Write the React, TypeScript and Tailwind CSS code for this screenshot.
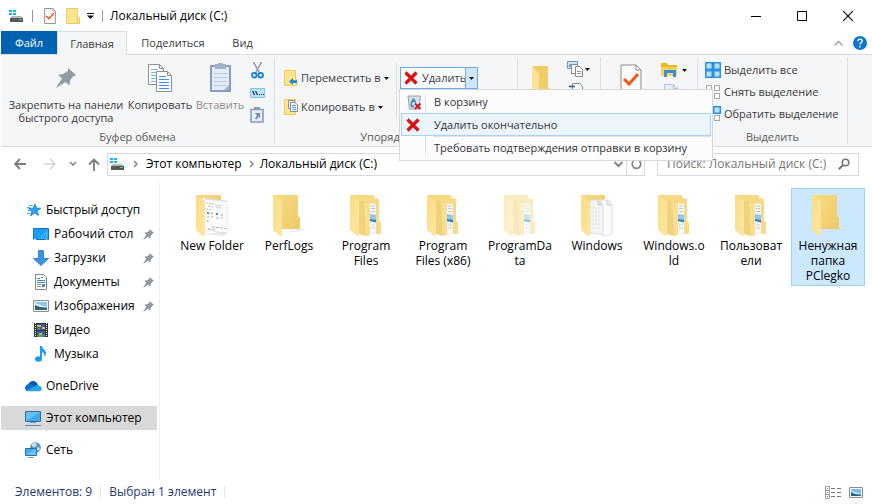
import type { ReactNode } from 'react';

function Drive() {
  return (
    <svg width="16" height="16" viewBox="0 0 16 16" className="shrink-0" aria-hidden="true">
      <path d="M1 2h3v2H1zM5 2h3v2H5zM1 5h3v2H1zM5 5h3v2H5z" fill="#16b4f0" />
      <path d="M4 8h9l2 2H2z" fill="#b4b7b9" />
      <path d="M2 10h13v4H2z" fill="#55585b" />
      <path d="M11 11h3v1h-3z" fill="#3fe03f" />
    </svg>
  );
}

function CheckDoc({ big = false }: { big?: boolean }) {
  return (
    <svg width={big ? 22 : 12} height={big ? 30 : 16} viewBox="0 0 22 30" className="shrink-0" aria-hidden="true">
      <path d="M1 1h15l5 5v23H1z" fill="#fcfcfc" stroke="#8b8b8b" strokeWidth={big ? 1 : 1.8} />
      <path d="M16 1v5h5" fill="none" stroke="#8b8b8b" />
      <path d="M4 15l5 5L18 10" fill="none" stroke="#f0591e" strokeWidth="3" />
    </svg>
  );
}

function SmallFolder() {
  return (
    <svg width="14" height="16" viewBox="0 0 14 16" className="shrink-0" aria-hidden="true">
      <path d="M.5.5h11V10h2v5.500H.5z" fill="#fce58f" stroke="#eacb62" />
      <path d="M11.500 10v5" stroke="#eacb62" />
    </svg>
  );
}

function Caret() {
  return (
    <svg width="5" height="3" viewBox="0 0 5 3" className="shrink-0" aria-hidden="true">
      <path d="M0 0h5L2.500 3z" fill="#111" />
    </svg>
  );
}

function Chevron({ down = false }: { down?: boolean }) {
  return (
    <svg width="8" height="8" viewBox="0 0 8 8" className="shrink-0" aria-hidden="true">
      <path d={down ? 'M1 2L4 5L7 2' : 'M2 1l3 3L2 7'} fill="none" stroke="#8a8a8a" strokeWidth="1.600" />
    </svg>
  );
}

function Pin({ size, color = '#8f9aa3' }: { size: number; color?: string }) {
  return (
    <svg width={size} height={size} viewBox="0 0 20 20" className="shrink-0" aria-hidden="true">
      <path d="M12 0l8 7-3 1.500-3 4-.5 5-4-3.500L0 20l6-9.500L2 7l5-1 5-3z" fill={color} />
    </svg>
  );
}

function CopyPages() {
  return (
    <svg width="25" height="28" viewBox="0 0 25 28" aria-hidden="true">
      <path d="M.5.5h11l4 4v16H.5z" fill="#fff" stroke="#8a9097" />
      <path d="M11.500.5v4h4" fill="none" stroke="#8a9097" />
      <path d="M3 5.500h7M3 8.500h10M3 11.500h10M3 14.500h10M3 17.500h10" stroke="#7db4f5" />
      <path d="M8.500 7.500h11l4 4v16h-15z" fill="#fff" stroke="#8a9097" />
      <path d="M19.500 7.500v4h4" fill="none" stroke="#8a9097" />
      <path d="M11 12.500h7M11 15.500h10M11 18.500h10M11 21.500h10M11 24.500h10" stroke="#3d8df2" />
    </svg>
  );
}

function Clipboard() {
  return (
    <svg width="21" height="29" viewBox="0 0 21 29" aria-hidden="true">
      <rect x="1" y="3" width="19" height="25" fill="#e4ebf6" stroke="#8b9cc0" strokeWidth="2" />
      <path d="M5 1h3V0h5v1h3v5H5z" fill="#a3b0ca" />
      <path d="M4 10.500h13M4 14.500h13M4 18.500h13M4 22.500h13" stroke="#bccbe4" />
      <path d="M14 27l5-5v5z" fill="#a3b0ca" />
    </svg>
  );
}

function Scissors() {
  return (
    <svg width="13" height="17" viewBox="0 0 13 17" aria-hidden="true">
      <path d="M2.500 0L8.500 11M10.500 0L4.500 11" stroke="#8797a8" strokeWidth="1.400" />
      <circle cx="3.300" cy="13.300" r="2.300" fill="none" stroke="#1583cf" strokeWidth="1.800" />
      <circle cx="9.700" cy="13.300" r="2.300" fill="none" stroke="#1583cf" strokeWidth="1.800" />
    </svg>
  );
}

function CopyPath() {
  return (
    <svg width="15" height="10" viewBox="0 0 15 10" aria-hidden="true">
      <path d="M.5.5h14v9H.5z" fill="#b9e2fb" stroke="#85c3ee" />
      <path d="M2.500 3l2 4M5.500 3l2 4M9 6.500h1M11 6.500h1M13 6.500h1" stroke="#17324d" strokeWidth="1.200" />
    </svg>
  );
}

function PasteShortcut() {
  return (
    <svg width="14" height="16" viewBox="0 0 14 16" aria-hidden="true">
      <path d="M1 2.500h12V15H1z" fill="#e6edf7" stroke="#8b9cc0" strokeWidth="1.600" />
      <path d="M4 0h6v3H4z" fill="#8b9cc0" />
      <path d="M5 6h5v5L8.500 9.500l-2 3-1.500-1 2-3z" fill="#7689b0" />
    </svg>
  );
}

function MoveTo() {
  return (
    <svg width="14" height="16" viewBox="0 0 14 16" className="shrink-0" aria-hidden="true">
      <path d="M.5.5h11V9l1 1v5.500H.5z" fill="#fce58f" stroke="#eacb62" />
      <path d="M5 11.500L9 8v2.300h4v2.600H9V15z" fill="#1c86d8" />
    </svg>
  );
}

function CopyTo() {
  return (
    <svg width="14" height="16" viewBox="0 0 14 16" className="shrink-0" aria-hidden="true">
      <path d="M.5.5h11v15H.5z" fill="#fce58f" stroke="#eacb62" />
      <path d="M4.500 1.500h6v8h-6z" fill="#fff" stroke="#858b93" />
      <path d="M6.500 3.500h4.500l2.500 2.500v6.500h-7z" fill="#fff" stroke="#858b93" />
      <path d="M8 6.500h4M8 8.500h4M8 10.500h4" stroke="#4a9af0" />
    </svg>
  );
}

function RedCross() {
  return (
    <svg width="14" height="14" viewBox="0 0 14 14" className="shrink-0" aria-hidden="true">
      <path d="M1.500 1.500L12.500 12.500M12.500 1.500L1.500 12.500" stroke="#dc1212" strokeWidth="3.200" />
    </svg>
  );
}

function RecycleBin() {
  return (
    <svg width="15" height="15" viewBox="0 0 15 15" className="shrink-0" aria-hidden="true">
      <path d="M1 1h12.500l-1.500 13H2.500z" fill="#d9dfe4" stroke="#9ba2a8" />
      <path d="M4 8.500l2.500-4 2 3M4 9L5 11.500h2" fill="none" stroke="#2585d0" strokeWidth="1.700" />
      <path d="M8 8.500l5.500 5.500M13.500 8.500L8 14" stroke="#d3131c" strokeWidth="1.900" />
    </svg>
  );
}

function NewFolder() {
  return (
    <svg width="20" height="42" viewBox="0 0 20 42" aria-hidden="true">
      <path d="M1 0h15v22l3 1v13H1z" fill="#f1cd68" />
      <path d="M0 0l7 8v33l-7-6z" fill="#fde396" />
    </svg>
  );
}

function NewItem() {
  return (
    <svg width="16" height="16" viewBox="0 0 16 16" aria-hidden="true">
      <path d="M.5.5h10v7H.5z" fill="#c9e7fb" stroke="#7d94a8" />
      <path d="M2 4h7M2 6l3-2 3 2" stroke="#2c7fb8" fill="none" />
      <path d="M4.500 3.500h6v9h-6z" fill="#eef5fb" stroke="#858b93" />
      <path d="M8.500 5.500h4l3 3v7h-7z" fill="#fff" stroke="#858b93" />
      <path d="M10 10.500h4M10 12.500h4" stroke="#8c949c" />
    </svg>
  );
}

function EasyAccess() {
  return (
    <svg width="14" height="16" viewBox="0 0 14 16" aria-hidden="true">
      <path d="M3.500.5h7l3 3v12h-10z" fill="#fff" stroke="#858b93" />
      <path d="M0 3.500h6" stroke="#205f98" strokeWidth="1.600" />
    </svg>
  );
}

function OpenFolder() {
  return (
    <svg width="17" height="15" viewBox="0 0 17 15" aria-hidden="true">
      <path d="M0 0h6l1 2h9v11H0z" fill="#f0b429" />
      <path d="M0 4h16v9H0z" fill="#ffd45e" />
      <path d="M3 14V7h12v7h-3v-4H6v4z" fill="#2f8fe2" />
    </svg>
  );
}

function EditPage() {
  return (
    <svg width="14" height="16" viewBox="0 0 14 16" aria-hidden="true">
      <path d="M.5.5h9l4 4v11H.5z" fill="#e9f0fa" stroke="#b4c4de" />
      <path d="M9.500.5v4h4" fill="none" stroke="#b4c4de" />
    </svg>
  );
}

function SelectGrid({ on }: { on: boolean[] }) {
  const cells = [[0, 0], [8, 0], [0, 8], [8, 8]];
  return (
    <svg width="16" height="16" viewBox="0 0 16 16" className="shrink-0" aria-hidden="true">
      {cells.map(([x, y], i) =>
        on[i] ? (
          <rect key={i} x={x + 0.75} y={y + 0.75} width={6.5} height={6.5} fill="#b6e2fc" stroke="#2a8fe0" strokeWidth={1.5} />
        ) : (
          <rect key={i} x={x + 1.5} y={y + 1.5} width={5} height={5} fill="#fdfdfd" stroke="#a9a9a9" />
        ),
      )}
    </svg>
  );
}

function Folder({ kind }: { kind: string }) {
  return (
    <svg width="34" height="42" viewBox="0 0 34 42" className={kind === 'hidden' ? 'opacity-50' : ''} aria-hidden="true">
      <defs>
        <linearGradient id="flap" x1="0" x2="1" y1="0" y2="1">
          <stop offset="0" stopColor="#f9dd85" />
          <stop offset="1" stopColor="#fde6a0" />
        </linearGradient>
        <linearGradient id="back" x1="0" x2="1" y1="0" y2="1">
          <stop offset="0" stopColor="#f8dc82" />
          <stop offset="1" stopColor="#edca69" />
        </linearGradient>
      </defs>
      {kind === 'empty' && (
        <>
          <path d="M9 39l19-5h3l-4 2z" fill="#dcdcdc" opacity=".7" />
          <path d="M1 0h25v21l2 1.500V34H1z" fill="url(#back)" />
        </>
      )}
      {kind === 'window' && (
        <>
          <path d="M1 0h25v12H1z" fill="url(#back)" />
          <path d="M10 39l22-3v3l-4 2z" fill="#ddd" opacity=".7" />
          <path d="M7 3l25 3v32L9 35z" fill="#fcfcfc" stroke="#dedede" strokeWidth=".7" />
          <path d="M10 4l21 2.500" stroke="#d5dbe0" />
          <path d="M11 8l8 1M13 11l5 1M20 10l7 1M21 12l5 1M11 14l6 1" stroke="#aaa" strokeWidth=".8" strokeDasharray="2 1" />
          <path d="M12 18h2M21 19h2" stroke="#3793d5" strokeWidth="2" />
          <path d="M16 18.500h2" stroke="#e4bc4d" strokeWidth="2" />
          <path d="M26 20h2M12 22h2M16 22h2M21 23h2M26 23h2M11 26h3" stroke="#aaa" />
          <path d="M17 32l14 1.500M13 34l8 1" stroke="#999" strokeWidth=".8" strokeDasharray="3 1" />
        </>
      )}
      {kind === 'pages' && (
        <>
          <path d="M1 0h24v12H1z" fill="url(#back)" />
          <path d="M10 5h11l4 4v31l-15-2z" fill="#f4f4f4" stroke="#dcdcdc" />
          <path d="M20 5h8l4 4v30l-9 2V9z" fill="#fbfbfb" stroke="#e0e0e0" />
          <path d="M27 5v5h5" fill="#e6e6e6" stroke="#d2d2d2" />
          <path d="M18 5l4 5h-4z" fill="#e6e6e6" stroke="#d2d2d2" />
          <path d="M12 13h8M12 17h8M12 21h8M12 25h8M12 29h8M12 33h8" stroke="#e0e0e0" strokeDasharray="2 1" />
        </>
      )}
      {(kind === 'full' || kind === 'hidden') && (
        <>
          <path d="M1 0h24v3l5 1v22l2 1.500V39H10L1 34z" fill="#f6d982" />
          <path d="M20 8l7 1v30l-7 1z" fill="#f4f5f5" />
          <path d="M22 11h4M22 13.500h4M22 16.500h4" stroke="#b9cad6" />
          <path d="M21 19l6 1v6l-6-2z" fill="#93c7ee" />
          <path d="M21 24l6 1v2.500l-6-1.500z" fill="#2a83c4" />
          <path d="M22 30h4M22 33h4" stroke="#d3dadf" />
          <path d="M27 26h3l2 1.500V39h-5z" fill="#f7db86" />
          <path d="M10 5l11 3v32l-4 1-7-2z" fill="#efd27e" />
          <path d="M15 7l6 1.500V40l-4 1z" fill="#fadf90" />
        </>
      )}
      <path d="M1 0l9 6v34l-1.500 1.500L1 35z" fill="url(#flap)" />
    </svg>
  );
}

function Star() {
  return (
    <svg width="16" height="16" viewBox="0 0 16 16" className="shrink-0" aria-hidden="true">
      <path d="M9 2l1.500 4 4.500.3-3.700 2.700 1.200 4.500L8.500 11l-4 3 1.300-4.700L2.500 6.500l4.500-.3z" fill="#29a3ec" stroke="#1678b8" strokeWidth=".7" />
      <path d="M3 3.500h4M1 5.500h3M2 8.500h3M1 11.500h3" stroke="#3eb0f0" />
    </svg>
  );
}

function Desktop() {
  return (
    <svg width="16" height="16" viewBox="0 0 16 16" className="shrink-0" aria-hidden="true">
      <path d="M.5 2.500h15v11H.5z" fill="#1c9df5" stroke="#0d74c4" />
      <path d="M5 13L15 3v10z" fill="#35adfa" />
      <path d="M1 13.500h2M13 13.500h1" stroke="#fff" />
    </svg>
  );
}

function Download() {
  return (
    <svg width="16" height="16" viewBox="0 0 16 16" className="shrink-0" aria-hidden="true">
      <path d="M5.500.5h5v8h5L8 15.500.5 8.500h5z" fill="#3d93e3" stroke="#2374c4" strokeWidth=".8" />
    </svg>
  );
}

function Docs() {
  return (
    <svg width="16" height="16" viewBox="0 0 16 16" className="shrink-0" aria-hidden="true">
      <path d="M2.500.5h8l3 3v12h-11z" fill="#fff" stroke="#868686" />
      <path d="M4 4.500h3M8 3.500h2M4 6.500h8M4 8.500h8" stroke="#3a8ed0" />
      <path d="M4 10.500h4M4 12.500h4" stroke="#999" />
      <path d="M9 10h3v3H9z" fill="#5d88ac" />
    </svg>
  );
}

function Picture() {
  return (
    <svg width="16" height="16" viewBox="0 0 16 16" className="shrink-0" aria-hidden="true">
      <path d="M.5 2.500h15v11H.5z" fill="#fff" stroke="#8b8b8b" />
      <path d="M2 4h12v8H2z" fill="#8cc4f0" />
      <path d="M2 5l6 2 6 2H2z" fill="#d9edfa" />
      <path d="M2 7l5 2 7 1v2H2z" fill="#2a6472" />
    </svg>
  );
}

function Video() {
  return (
    <svg width="16" height="16" viewBox="0 0 16 16" className="shrink-0" aria-hidden="true">
      <path d="M1 1h14v14H1z" fill="#333" />
      <path d="M2.500 1v14M13.500 1v14" stroke="#eee" strokeDasharray="1 1" />
      <path d="M4 2h8v6H4zM4 9h8v6H4z" fill="#2f5fb5" />
      <path d="M4 3h4v2H4zM9 5h3v2H9zM6 11h3v2H6z" fill="#e7b33c" />
      <path d="M5 6h2v2H5zM4 13h8v2H4z" fill="#4d9b58" />
    </svg>
  );
}

function Music() {
  return (
    <svg width="16" height="16" viewBox="0 0 16 16" className="shrink-0" aria-hidden="true">
      <ellipse cx="5.500" cy="13" rx="3.500" ry="2.700" fill="#1b9bf2" />
      <path d="M7 0h2c0 3 4 4 4 7 0 2-1 3-2 4 1-3 0-4-2-5v7H7z" fill="#1b9bf2" />
    </svg>
  );
}

function OneDrive() {
  return (
    <svg width="17" height="16" viewBox="0 0 17 16" className="shrink-0" aria-hidden="true">
      <path d="M3 7c1-3 3-4 5-4s4 1 5 4l-5 4z" fill="#0a59b0" />
      <path d="M0 10c0-2 2-4 4-4 2-.5 4 1 6 2l-7 5C1 13 0 12 0 10z" fill="#0e6fcf" />
      <path d="M2 12.500L10 8c2-1.500 4-1 4.500 0 2 .5 2.500 2 2.300 3-.3 1.500-1.500 2.200-2.800 2.200H3.500z" fill="#2aa4ea" />
    </svg>
  );
}

function Computer() {
  return (
    <svg width="17" height="16" viewBox="0 0 17 16" className="shrink-0" aria-hidden="true">
      <path d="M.5 1.500h15v10H.5z" fill="#63c3f9" stroke="#3a6d91" />
      <path d="M1 11L15 2v9z" fill="#3fa8ee" />
      <path d="M5 12.500h6" stroke="#7797ad" />
      <path d="M0 15.500h16" stroke="#6f889a" />
    </svg>
  );
}

function Network() {
  return (
    <svg width="17" height="16" viewBox="0 0 17 16" className="shrink-0" aria-hidden="true">
      <circle cx="10.500" cy="5.500" r="5.300" fill="#5a93b5" />
      <path d="M7 2l3-1.500 2 2-2 3-3-1zM12 5l3 1-1 3-2-1z" fill="#c3dfec" />
      <path d="M.5 6.500h11v7H.5z" fill="#45aef0" stroke="#2a6f9f" />
      <path d="M1 13l10-6v6z" fill="#69c6fb" />
      <path d="M3 15.500h6" stroke="#7797ad" />
    </svg>
  );
}

function Divider() {
  return <div className="my-[2px] w-px shrink-0 bg-[#dfe0e3]" />;
}

function Group({ label, className, children }: { label?: string; className: string; children: ReactNode }) {
  return (
    <section className={`flex shrink-0 flex-col ${className}`}>
      <div className="flex h-[74px] items-start">{children}</div>
      {label && <h2 className="text-center leading-4 text-[#5a5a5a]">{label}</h2>}
    </section>
  );
}

const places = [
  { name: 'Рабочий стол', icon: <Desktop />, pinned: true },
  { name: 'Загрузки', icon: <Download />, pinned: true },
  { name: 'Документы', icon: <Docs />, pinned: true },
  { name: 'Изображения', icon: <Picture />, pinned: true },
  { name: 'Видео', icon: <Video />, pinned: false },
  { name: 'Музыка', icon: <Music />, pinned: false },
];

const roots = [
  { name: 'OneDrive', icon: <OneDrive />, active: false },
  { name: 'Этот компьютер', icon: <Computer />, active: true },
  { name: 'Сеть', icon: <Network />, active: false },
];

const files = [
  { name: 'New Folder', kind: 'window' },
  { name: 'PerfLogs', kind: 'empty' },
  { name: 'Program Files', kind: 'full' },
  { name: 'Program Files (x86)', kind: 'full' },
  { name: 'ProgramData', kind: 'hidden' },
  { name: 'Windows', kind: 'pages' },
  { name: 'Windows.o\nld', kind: 'full' },
  { name: 'Пользователи', kind: 'full' },
  { name: 'Ненужная папка PClegko', kind: 'empty', selected: true },
];

function TitleBar() {
  return (
    <header className="flex h-[31px] items-center pr-px pl-2 text-black">
      <Drive />
      <span className="ml-2 h-3 w-px bg-[#9a9a9a]" />
      <button className="ml-[11px]" aria-label="Свойства"><CheckDoc /></button>
      <button className="ml-[10px]" aria-label="Новая папка"><SmallFolder /></button>
      <button className="ml-[7px]" aria-label="Настройка панели">
        <svg width="7" height="6" viewBox="0 0 7 6" aria-hidden="true">
          <path d="M0 .5h7" stroke="#111" />
          <path d="M0 2.500h7L3.500 6z" fill="#111" />
        </svg>
      </button>
      <span className="ml-2 h-3 w-px bg-[#9a9a9a]" />
      <h1 className="ml-[7px] grow">Локальный диск (C:)</h1>
      <button className="flex h-full w-[46px] items-center justify-center" aria-label="Свернуть">
        <svg width="10" height="10" viewBox="0 0 10 10"><path d="M0 5.500h10" stroke="#000" /></svg>
      </button>
      <button className="flex h-full w-[46px] items-center justify-center" aria-label="Развернуть">
        <svg width="10" height="10" viewBox="0 0 10 10"><path d="M.5.5h9v9h-9z" fill="none" stroke="#000" /></svg>
      </button>
      <button className="flex h-full w-[46px] items-center justify-center" aria-label="Закрыть">
        <svg width="10" height="10" viewBox="0 0 10 10"><path d="M0 0l10 10M10 0L0 10" stroke="#000" strokeWidth="1.100" /></svg>
      </button>
    </header>
  );
}

function Tabs() {
  return (
    <nav className="flex h-6 items-stretch border-b border-[#dadbdc] pl-px text-[11px] text-[#3b3b3b]">
      <button className="w-14 bg-[#0063b1] text-white">Файл</button>
      <button className="-mb-px w-[70px] border border-b-0 border-[#dadbdc] bg-[#f5f6f7]">Главная</button>
      <button className="w-[92px]">Поделиться</button>
      <button className="w-[47px]">Вид</button>
      <div className="grow" />
      <button className="mr-[10px]" aria-label="Свернуть ленту">
        <svg width="9" height="6" viewBox="0 0 9 6"><path d="M.5 5.500L4.500 1.500l4 4" fill="none" stroke="#a0a0a0" strokeWidth="1.500" /></svg>
      </button>
      <button className="mr-[5px]" aria-label="Справка">
        <svg width="14" height="14" viewBox="0 0 14 14">
          <circle cx="7" cy="7" r="7" fill="#0f75cf" />
          <path d="M5 5.200c0-2.800 4.200-2.600 4.200-.1 0 1.600-2.200 1.500-2.200 3.400M7 9.800v1.600" fill="none" stroke="#fff" strokeWidth="1.400" />
        </svg>
      </button>
    </nav>
  );
}

function DeleteMenu() {
  return (
    <div role="menu" className="absolute top-[22px] -left-px z-10 w-[314px] border border-[#d5d7da] bg-[#fcfcfd] p-px text-[#333]">
      <div className="absolute inset-y-1 left-[25px] w-px bg-[#e1e3e6]" />
      <button role="menuitem" className="flex h-[22px] w-full items-center pl-[6px] text-left">
        <RecycleBin />
        <span className="ml-3">В корзину</span>
      </button>
      <button role="menuitem" className="relative flex h-[23px] w-full items-center border border-[#a8d2fa] bg-[#ecf4fc] pl-1 text-left">
        <RedCross />
        <span className="ml-[14px]">Удалить окончательно</span>
      </button>
      <div className="ml-8 h-px bg-[#e1e3e6]" />
      <button role="menuitem" className="flex h-[22px] w-full items-center pl-[33px] text-left">
        Требовать подтверждения отправки в корзину
      </button>
    </div>
  );
}

function Ribbon() {
  return (
    <div className="ml-px flex h-[92px] items-stretch border-b border-[#d9dadc] bg-[#f5f6f7] text-[11px] text-[#3b3b3b]">
      <Group label="Буфер обмена" className="w-[273px]">
        <button className="ml-[5px] flex w-[120px] flex-col items-center pt-[13px] leading-[13px]">
          <Pin size={20} />
          <span className="mt-[10px]">Закрепить на панели быстрого доступа</span>
        </button>
        <button className="flex w-[68px] flex-col items-center pt-[9px] leading-[13px]">
          <CopyPages />
          <span className="mt-[6px]">Копировать</span>
        </button>
        <button className="flex w-[52px] flex-col items-center pt-2 leading-[13px] text-[#8d8d8d]">
          <Clipboard />
          <span className="mt-[6px]">Вставить</span>
        </button>
        <div className="flex w-[22px] flex-col items-center gap-[9px] pt-[7px]">
          <button aria-label="Вырезать"><Scissors /></button>
          <button aria-label="Скопировать путь"><CopyPath /></button>
          <button aria-label="Вставить ярлык"><PasteShortcut /></button>
        </div>
      </Group>
      <Divider />
      <Group label="Упорядочить" className="w-[242px]">
        <div className="flex w-[121px] flex-col gap-[13px] pt-[15px] pl-[9px] whitespace-nowrap">
          <button className="flex h-4 items-center gap-[3px]">
            <MoveTo />
            Переместить в
            <Caret />
          </button>
          <button className="flex h-4 items-center gap-[3px]">
            <CopyTo />
            Копировать в
            <Caret />
          </button>
        </div>
        <div className="mt-2 h-14 w-px bg-[#dfe0e3]" />
        <div className="relative mt-3 ml-[3px] flex h-[22px]">
          <button className="flex w-[66px] items-center gap-1 border border-[#6aaaea] bg-[#fbfcfd] pl-[3px]">
            <RedCross />
            Удалить
          </button>
          <button className="-ml-px flex w-[13px] items-center justify-center border border-[#6aaaea] bg-[#cfe5fc]" aria-label="Параметры удаления">
            <Caret />
          </button>
          <DeleteMenu />
        </div>
      </Group>
      <Divider />
      <Group className="w-[82px]">
        <button className="mt-[11px] ml-[14px]" aria-label="Новая папка"><NewFolder /></button>
        <div className="mt-[6px] ml-[15px] flex flex-col gap-[6px]">
          <button className="flex items-center gap-[2px]" aria-label="Создать элемент"><NewItem /><Caret /></button>
          <button aria-label="Простой доступ" className="pl-[2px]"><EasyAccess /></button>
        </div>
      </Group>
      <Divider />
      <Group className="w-24">
        <button className="mt-[9px] ml-[19px]" aria-label="Свойства"><CheckDoc big /></button>
        <div className="mt-2 ml-[19px] flex flex-col gap-[6px]">
          <button className="flex items-center gap-1" aria-label="Открыть"><OpenFolder /><Caret /></button>
          <button aria-label="Изменить" className="pl-[3px]"><EditPage /></button>
        </div>
      </Group>
      <Divider />
      <Group label="Выделить" className="w-[149px]">
        <div className="flex flex-col pt-1 pl-[7px] whitespace-nowrap">
          <button className="flex h-[22px] items-center gap-[3px]"><SelectGrid on={[true, true, true, true]} />Выделить все</button>
          <button className="flex h-[22px] items-center gap-[3px]"><SelectGrid on={[false, false, false, false]} />Снять выделение</button>
          <button className="flex h-[22px] items-center gap-[3px]"><SelectGrid on={[true, true, false, false]} />Обратить выделение</button>
        </div>
      </Group>
      <Divider />
    </div>
  );
}

function AddressBar() {
  return (
    <div className="flex h-[34px] items-center pr-[13px] pl-[14px] text-black">
      <button aria-label="Назад">
        <svg width="12" height="12" viewBox="0 0 12 12"><path d="M12 6H1M6 1L1 6l5 5" fill="none" stroke="#7c7c7c" strokeWidth="1.800" /></svg>
      </button>
      <button className="ml-[18px]" aria-label="Вперёд">
        <svg width="12" height="12" viewBox="0 0 12 12"><path d="M0 6h11M6 1l5 5-5 5" fill="none" stroke="#d6d6d6" strokeWidth="1.600" /></svg>
      </button>
      <button className="ml-[13px]" aria-label="Последние расположения"><Chevron down /></button>
      <button className="ml-[11px]" aria-label="Вверх">
        <svg width="12" height="13" viewBox="0 0 12 13"><path d="M6 13V1.500M1 6.500l5-5 5 5" fill="none" stroke="#7c7c7c" strokeWidth="1.800" /></svg>
      </button>
      <div className="ml-[7px] flex h-[23px] grow items-center border border-[#d9d9d9] pl-px">
        <Drive />
        <span className="ml-[7px]"><Chevron /></span>
        <a href="#computer" className="ml-[6px]">Этот компьютер</a>
        <span className="ml-[6px]"><Chevron /></span>
        <a href="#disk-c" className="ml-1 grow">Локальный диск (C:)</a>
        <button className="mr-[3px]" aria-label="Предыдущие расположения">
          <svg width="9" height="8" viewBox="0 0 9 8"><path d="M.5 2l4 4 4-4" fill="none" stroke="#888" strokeWidth="2" /></svg>
        </button>
        <button className="flex h-full items-center border-l border-[#d9d9d9] pr-[2px] pl-1" aria-label="Обновить">
          <svg width="11" height="12" viewBox="0 0 11 12"><path d="M2.500 3A4.300 4.300 0 1 0 8.500 3M5 1h4v4" fill="none" stroke="#888" strokeWidth="1.700" /></svg>
        </button>
      </div>
      <div className="ml-3 flex h-[23px] w-[202px] items-center border border-[#d9d9d9] pr-2 pl-[9px]">
        <input type="search" aria-label="Поиск" placeholder="Поиск: Локальный диск (C:)" className="min-w-0 grow outline-none placeholder:text-[#767676]" />
        <svg width="12" height="12" viewBox="0 0 12 12" className="shrink-0" aria-hidden="true">
          <circle cx="7.500" cy="4.500" r="3.300" fill="none" stroke="#777" strokeWidth="1.600" />
          <path d="M5 7L.8 11.200" stroke="#777" strokeWidth="2" />
        </svg>
      </div>
    </div>
  );
}

function Sidebar() {
  return (
    <aside className="w-[160px] shrink-0 border-r border-[#f0f0f0] pt-[17px] pr-[2px] pl-px text-black">
      <a href="#quick" className="flex h-6 items-center gap-1 pl-[25px] whitespace-nowrap"><Star />Быстрый доступ</a>
      <ul className="mb-2">
        {places.map((place) => (
          <li key={place.name}>
            <a href="#place" className="flex h-6 items-center gap-[5px] pr-[3px] pl-8 whitespace-nowrap">
              {place.icon}
              <span className="grow">{place.name}</span>
              {place.pinned && <Pin size={11} />}
            </a>
          </li>
        ))}
      </ul>
      <ul className="flex flex-col gap-2">
        {roots.map((root) => (
          <li key={root.name}>
            <a href="#root" className={`flex h-6 items-center gap-1 pl-6 whitespace-nowrap ${root.active ? 'bg-[#d9d9d9]' : ''}`}>
              {root.icon}
              {root.name}
            </a>
          </li>
        ))}
      </ul>
    </aside>
  );
}

export default function App() {
  return (
    <div className="flex min-h-screen flex-col bg-white font-['Open_Sans','Noto_Sans',sans-serif] text-[12px] leading-4">
      <TitleBar />
      <Tabs />
      <Ribbon />
      <AddressBar />
      <div className="flex grow">
        <Sidebar />
        <main className="flex grow flex-wrap content-start gap-[3px] pt-[7px] pr-1 pl-[15px] text-black">
          {files.map((file) => (
            <button
              key={file.name}
              className={`flex min-h-[98px] w-[74px] flex-col items-center border px-[2px] pt-[6px] leading-[15px] ${file.selected ? 'border-[#99d1ff] bg-[#cce8ff]' : 'border-transparent'}`}
            >
              <Folder kind={file.kind} />
              <span className="mt-px w-full break-words whitespace-pre-line">{file.name}</span>
            </button>
          ))}
        </main>
      </div>
      <footer className="flex h-6 items-center pl-[15px] text-[#26396b]">
        <span>Элементов: 9</span>
        <span className="ml-2 h-3 w-px bg-[#e4e4e4]" />
        <span className="ml-2">Выбран 1 элемент</span>
        <span className="ml-2 h-3 w-px bg-[#e4e4e4]" />
        <div className="grow" />
        <button className="mr-2" aria-label="Таблица">
          <svg width="16" height="13" viewBox="0 0 16 13">
            <path d="M.5.5h4v12h-4zM.5 4.500h4M.5 8.500h4" fill="#fff" stroke="#999" />
            <path d="M6 2.500h4M12 2.500h4M6 6.500h4M12 6.500h4M6 10.500h4M12 10.500h4" stroke="#777" />
            <path d="M2 2h1v1H2z" fill="#3a9a5c" /><path d="M2 6h1v1H2z" fill="#2f86e8" /><path d="M2 10h1v1H2z" fill="#e03030" />
          </svg>
        </button>
        <button className="mr-[9px]" aria-label="Крупные значки">
          <svg width="14" height="11" viewBox="0 0 14 11">
            <path d="M.5.5h13v10H.5z" fill="#fff" stroke="#8b8b8b" />
            <path d="M2 2h10v7H2z" fill="#7dbcf0" /><path d="M2 4l10 3H2z" fill="#d6ecfa" /><path d="M2 5l4 2 6 1v1H2z" fill="#2a6472" />
          </svg>
        </button>
      </footer>
    </div>
  );
}
